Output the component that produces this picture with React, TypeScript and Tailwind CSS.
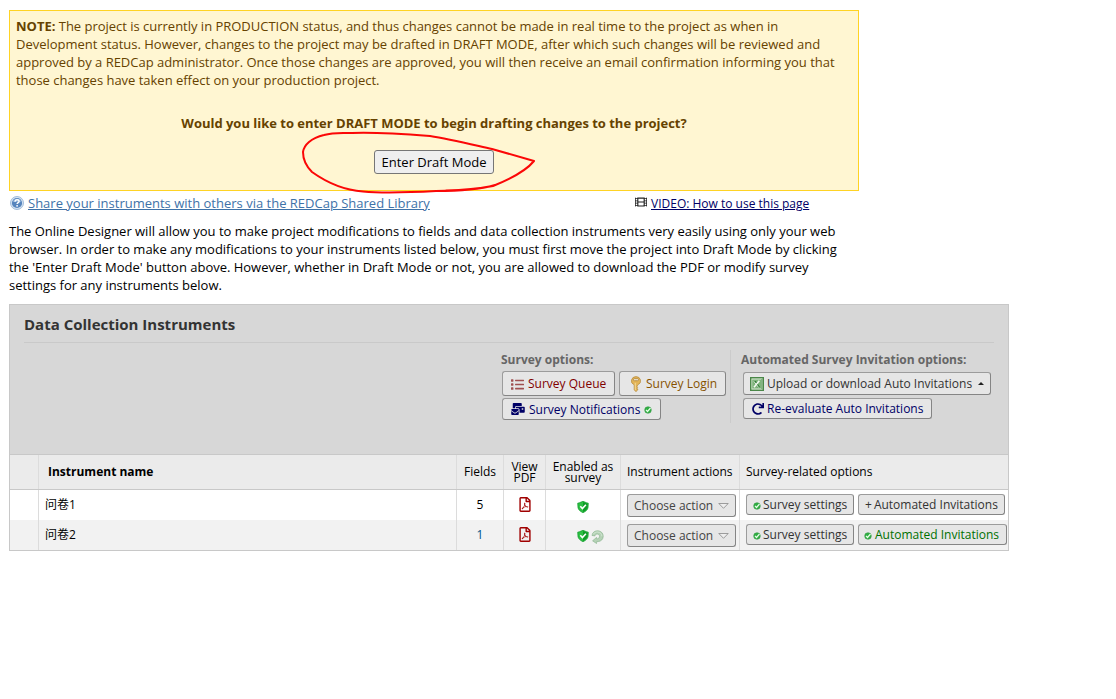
import type { ReactNode } from 'react';
import { FaFilm, FaList, FaMailBulk, FaRedo, FaRegFilePdf } from 'react-icons/fa';

function Check({ className = '' }: { className?: string }) {
  return (
    <svg viewBox="0 0 8 8" className={'h-2 w-2 shrink-0 ' + className}>
      <circle cx="4" cy="4" r="3.300" fill="#2fae42" stroke="#3c9c4b" strokeWidth=".6" />
      <path d="M2 3.900l1.500 1.600L6.500 2" fill="none" stroke="#e6ffe6" strokeWidth="1.200" />
    </svg>
  );
}

function Shield() {
  return (
    <svg viewBox="0 0 12 12" className="h-3 w-3 shrink-0">
      <path d="M.7 2.200L2.300 1.800 6 .3l3.700 1.500 1.600.4-.3 4.600C10.500 9 8.500 10.500 6 11.700 3.500 10.500 1.500 9 1 6.800z" fill="#2cc043" stroke="#0f9a2a" strokeWidth=".7" />
      <path d="M6 1v10c2.500-1.200 4-2.500 4.400-4.500l.3-3.800-1.200-.3z" fill="#109a28" />
      <path d="M3.300 5.300l2.100 2.200 3.500-3.700" fill="none" stroke="#fff" strokeWidth="1.600" />
    </svg>
  );
}

function Repeat() {
  return (
    <svg viewBox="0 0 13 14" className="h-3.5 w-[13px] shrink-0">
      <path d="M1 5.500C1.300 2.700 3.500.8 6.500.8c3.300 0 5.700 2.300 5.700 5.400 0 3-2.200 5.200-5 5.300l-1.500.1-.2 1.900-3.900-2.700 4-3.400.1 1.500c1.700.1 2.800-1.100 2.800-2.600 0-1.400-1-2.300-2.300-2.300-1.300 0-2.100.7-2.200 1.900z" fill="#b5d2b6" stroke="#8db691" strokeWidth=".7" strokeLinejoin="round" />
      <path d="M2.200 4.300C3.300 2.500 5 1.900 6.800 2c2.500.2 4.200 2 4.100 4.300" fill="none" stroke="#d3e5d4" strokeWidth=".9" />
    </svg>
  );
}

function Help() {
  return (
    <svg viewBox="0 0 14 14" className="h-3.5 w-3.5 shrink-0">
      <circle cx="7" cy="7" r="6.500" fill="#d7e4f3" stroke="#8eaed2" strokeWidth=".8" />
      <circle cx="7" cy="7" r="5.100" fill="#5684bd" />
      <path d="M2.700 6a4.400 4.200 0 0 1 8.600 0z" fill="#84a8d3" />
      <path d="M5 5.700C5.100 4.300 6 3.700 7.100 3.700c1.200 0 2 .7 2 1.700 0 1.300-2 1.300-2 2.700" fill="none" stroke="#fff" strokeWidth="1.400" />
      <rect x="6.300" y="9.100" width="1.600" height="1.500" fill="#fff" />
    </svg>
  );
}

function KeyIcon() {
  return (
    <svg viewBox="0 0 12 16" className="h-4 w-3 shrink-0">
      <path d="M6 .6a4.800 4.300 0 0 0-1.800 8.200V14l1.800 1.600L7.700 14v-1l-.9-.9.9-.9-.8-.9.9-1.500A4.800 4.300 0 0 0 6 .6z" fill="#e3b558" stroke="#b98f45" strokeWidth=".8" />
      <rect x="3.400" y="2.700" width="5.200" height="2" rx="1" fill="#eee8dc" stroke="#a97b2c" strokeWidth=".7" />
      <path d="M5.300 6.800v7.200" stroke="#f6dc9c" strokeWidth=".9" />
    </svg>
  );
}

function Excel() {
  return (
    <svg viewBox="0 0 14 14" className="h-3.5 w-3.5 shrink-0">
      <rect x=".7" y=".7" width="12.600" height="12.600" fill="#dcebd8" stroke="#4a8748" strokeWidth="1.400" />
      <rect x="2.200" y="2.500" width="8.800" height="9" fill="#7fb47c" />
      <path d="M3.200 4h2.600l4.400 6.300H7.600z" fill="#2f7a33" />
      <path d="M9.300 3.700L4 10.300" stroke="#f4faf2" strokeWidth="1.600" />
      <path d="M3.700 4.200l4.800 6.200" stroke="#f4faf2" strokeWidth=".9" />
      <path d="M11.900 2v10" stroke="#6fa56d" strokeWidth="1.400" />
    </svg>
  );
}

function Btn({ className, children }: { className: string; children: ReactNode }) {
  return (
    <button
      className={
        'flex shrink-0 items-center whitespace-nowrap rounded-[3px] border border-[#9c9c9c] border-r-[#858585] border-b-[#858585] bg-[#e6e6e6] ' +
        className
      }
    >
      {children}
    </button>
  );
}

const rows = [
  { name: '问卷1', fields: '5', repeating: false, automated: false },
  { name: '问卷2', fields: '1', repeating: true, automated: true },
];

const grid = 'grid grid-cols-[29px_418px_47px_42px_75px_119px_268px]';
const cell = 'border-r border-[#dcdcdc]';

export default function App() {
  return (
    <div className="h-[699px] w-[1116px] overflow-hidden bg-white pl-[9px] pt-2.5 font-['Open_Sans','Noto_Sans_CJK_SC',sans-serif] text-[13px] leading-[18px] text-black">
      <section className="relative h-[181px] w-[850px] whitespace-nowrap border border-[#ffd324] bg-[#fff6d2] px-1.5 pt-1.5 text-[#664200]">
        <p className="tracking-[-0.014px]">
          <b>NOTE:</b> The project is currently in PRODUCTION status, and thus changes cannot be made in real time to the project as when in<br />
          Development status. However, changes to the project may be drafted in DRAFT MODE, after which such changes will be reviewed and<br />
          approved by a REDCap administrator. Once those changes are approved, you will then receive an email confirmation informing you that<br />
          those changes have taken effect on your production project.
        </p>
        <p className="mt-[25px] text-center font-bold tracking-[-0.014px]">
          Would you like to enter DRAFT MODE to begin drafting changes to the project?
        </p>
        <button className="mx-auto mt-[18px] flex h-6 w-[120px] items-center justify-center rounded-[3px] border border-[#767676] bg-[#efefef] text-black">
          Enter Draft Mode
        </button>
        <svg viewBox="0 0 240 66" className="absolute left-[290px] top-[119px] h-[66px] w-[240px]" fill="none" stroke="#fb0707" strokeWidth="2" strokeLinejoin="round" strokeLinecap="round">
          <path d="M195 55C181 59 160 61 136 61C108 62.500 80 63 63 61.500C43 60 26 52 12 42C7 37 3 29 3 22C4 15 11 8 24 5C34 2 43 3 52 3C77 2 104 4 130 6C150 9 174 15 192 19L234 31C225 42 208 50 193 56C182 58 164 60 146 60.500" />
        </svg>
      </section>

      <div className="flex h-[31px] whitespace-nowrap pt-[3px]">
        <div className="flex w-[625px] items-start text-[#3e72a8]">
          <span className="mt-0.5 flex w-[19px] pl-px"><Help /></span>
          <a className="text-[13px] underline">Share your instruments with others via the REDCap Shared Library</a>
        </div>
        <FaFilm className="mr-[3px] mt-0.5 h-3 w-[14px] text-[#222]" />
        <a className="mt-px text-[12px] text-[#000066] underline">VIDEO: How to use this page</a>
      </div>

      <p className="h-[82px] whitespace-nowrap tracking-[-0.014px]">
        The Online Designer will allow you to make project modifications to fields and data collection instruments very easily using only your web<br />
        browser. In order to make any modifications to your instruments listed below, you must first move the project into Draft Mode by clicking<br />
        the 'Enter Draft Mode' button above. However, whether in Draft Mode or not, you are allowed to download the PDF or modify survey<br />
        settings for any instruments below.
      </p>

      <section className="h-[247px] w-[1000px] whitespace-nowrap border border-[#c8c8c8]">
        <header className="h-[149px] bg-[#d7d7d7] px-3.5 pt-2.5">
          <h1 className="h-7 border-b border-[#c9c9c9] text-[15px] font-bold text-[#333]">Data Collection Instruments</h1>
          <div className="flex pt-[7px]">
            <div className="h-[73px] w-[707px] border-r border-[#cbcbcb] pl-[477px]">
              <h2 className="pt-px text-[12px] font-bold text-[#666]">Survey options:</h2>
              <div className="ml-px mt-0.5 flex gap-1">
                <Btn className="h-[25px] w-[113px] pl-2 pt-px text-[12px] text-[#800000]">
                  <FaList className="mr-1 h-[13px] w-[13px] text-[#a05050]" />Survey Queue
                </Btn>
                <Btn className="h-[25px] w-[107px] pl-2.5 pt-px text-[12px] text-[#865200]">
                  <KeyIcon /><span className="ml-1">Survey Login</span>
                </Btn>
              </div>
              <Btn className="ml-px mt-0.5 h-[22px] w-[159px] pl-2 pt-px text-[12px] text-[#000066]">
                <FaMailBulk className="mb-0.5 mr-1 h-3 w-[14px]" />Survey Notifications<Check className="ml-1" />
              </Btn>
            </div>
            <div className="pl-[10px]">
              <h2 className="pt-px text-[12px] font-bold text-[#666]">Automated Survey Invitation options:</h2>
              <Btn className="ml-0.5 mt-[3px] h-[23px] w-[248px] pl-1.5 text-[12px] text-[#333]">
                <Excel /><span className="ml-[3px]">Upload or download Auto Invitations</span>
                <svg viewBox="0 0 6 3" className="ml-[6px] h-[3px] w-1.5"><path d="M3 0l3 3H0z" fill="#222" /></svg>
              </Btn>
              <Btn className="ml-0.5 mt-[3px] h-[21px] w-[189px] pl-2 text-[12px] text-[#000066]">
                <FaRedo className="mr-[3px] h-3 w-3" />Re-evaluate Auto Invitations
              </Btn>
            </div>
          </div>
        </header>

        <div className={grid + ' h-9 border-y border-[#c8c8c8] bg-[#ebebeb] text-[12px]'}>
          <div className={cell} />
          <div className={cell + ' flex items-center pl-[9px] font-bold'}>Instrument name</div>
          <div className={cell + ' flex items-center justify-center'}>Fields</div>
          <div className={cell + ' flex items-center justify-center text-center leading-[11px]'}>View<br />PDF</div>
          <div className={cell + ' flex items-center justify-center text-center leading-[11px]'}>Enabled as<br />survey</div>
          <div className={cell + ' flex items-center pl-1.5'}>Instrument actions</div>
          <div className="flex items-center pl-1.5">Survey-related options</div>
        </div>

        {rows.map((row) => (
          <div key={row.name} className={grid + ' h-[30px] text-[12px] ' + (row.automated ? 'bg-[#f2f2f2]' : 'bg-white')}>
            <div className={cell} />
            <div className={cell + ' flex items-center pl-1.5'}>{row.name}</div>
            <div className={cell + ' flex items-center justify-center ' + (row.automated ? 'text-[#00558c]' : '')}>{row.fields}</div>
            <div className={cell + ' flex items-center justify-center pb-0.5'}>
              <FaRegFilePdf className="h-[15px] w-[12px] text-[#a00000]" />
            </div>
            <div className={cell + ' flex items-center pl-[31px] ' + (row.repeating ? 'pt-0.5' : 'pt-1')}>
              <Shield />
              {row.repeating && <span className="ml-0.5 mt-0.5 flex"><Repeat /></span>}
            </div>
            <div className={cell + ' pl-1.5 pt-1'}>
              <Btn className="h-[23px] w-[109px] pl-1.5 text-[12px] text-[#444]">
                Choose action
                <svg viewBox="0 0 11 6" className="ml-[5px] h-1.5 w-[11px] shrink-0"><path d="M.8.5h9.400L5.500 5.300z" fill="#eee" stroke="#888" strokeWidth=".8" /></svg>
              </Btn>
            </div>
            <div className="flex gap-1 pl-1.5 pt-1">
              <Btn className="h-[21px] w-[108px] pl-1.5 text-[12px] text-[#333]">
                <Check className="mr-0.5 mt-[3px]" />Survey settings
              </Btn>
              {row.automated ? (
                <Btn className="h-[21px] w-[149px] pl-[5px] text-[12px] text-[#007000]">
                  <Check className="mr-[3px] mt-[3px]" />Automated Invitations
                </Btn>
              ) : (
                <Btn className="h-[21px] w-[147px] pl-1.5 text-[12px] text-[#333]">
                  <span className="mr-0.5">+</span>Automated Invitations
                </Btn>
              )}
            </div>
          </div>
        ))}
      </section>
    </div>
  );
}
